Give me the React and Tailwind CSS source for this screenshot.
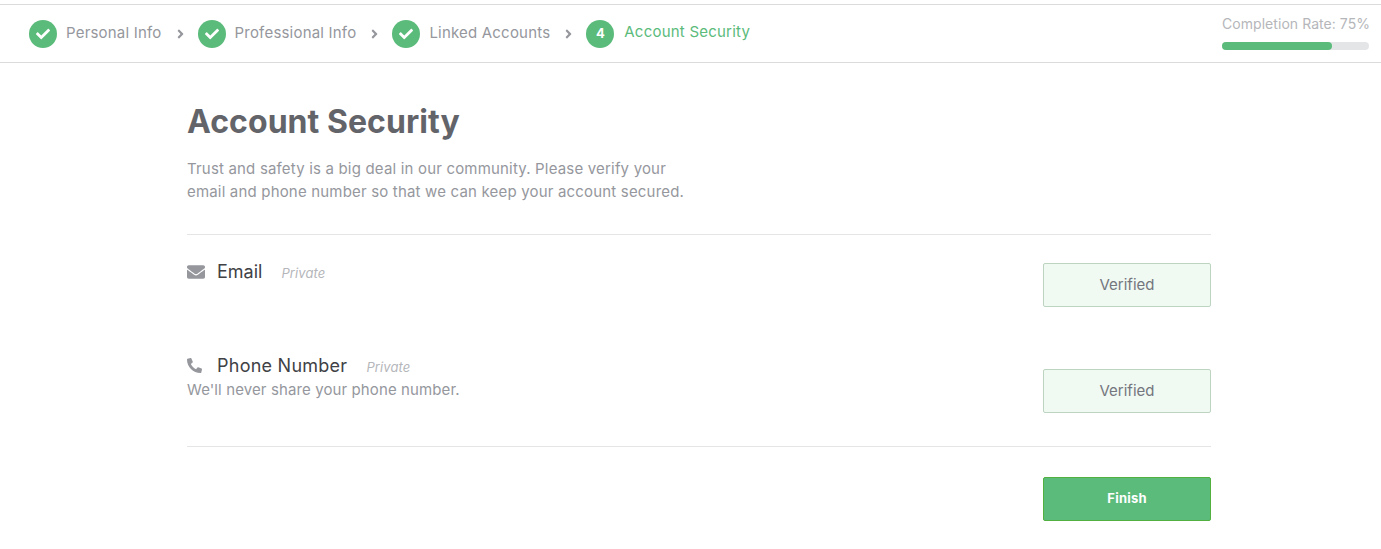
import { FaCheck, FaEnvelope, FaPhone, FaAngleRight } from "react-icons/fa";

const font = "font-['Inter',sans-serif]";

function Step({ label, done, number, active }) {
  return (
    <div className="flex items-center">
      <div className="w-7 h-7 rounded-full bg-[#5bbb7b] flex items-center justify-center text-white">
        {done ? <FaCheck className="w-[14px] h-[14px]" /> : <span className="text-[13px] font-bold">{number}</span>}
      </div>
      {active ? (
        <span className="ml-[10px] -mt-[2px] text-[15px] tracking-[0.22px] text-[#5bbb7b]">{label}</span>
      ) : (
        <span className="ml-[9px] text-[15px] tracking-[0.2px] text-[#95979d]">{label}</span>
      )}
    </div>
  );
}

function Chevron() {
  return <FaAngleRight className="ml-[13px] mr-3 w-[11px] h-[14px] text-[#95979d]" />;
}

function VerifiedButton() {
  return (
    <div className="w-[168px] h-[44px] rounded-[2px] border border-[#bcd4c0] bg-[#f0f9f2] flex items-center justify-center text-[15px] text-[#74767e]">
      Verified
    </div>
  );
}

export default function App() {
  return (
    <div className={`${font} bg-white min-h-[549px] pt-1`}>
      <div className="h-[59px] border-y border-[#dadbdd] flex items-center justify-between pl-[29px] pr-3">
        <div className="flex items-center">
          <Step label="Personal Info" done />
          <Chevron />
          <Step label="Professional Info" done />
          <Chevron />
          <Step label="Linked Accounts" done />
          <Chevron />
          <Step label="Account Security" number="4" active />
        </div>
        <div className="w-[147px] -mt-1">
          <p className="text-[14px] leading-[20px] tracking-[0.05px] text-[#b5b6ba] whitespace-nowrap">Completion Rate: 75%</p>
          <div className="mt-2 h-2 rounded-full bg-[#e4e5e7]">
            <div className="h-2 w-[75%] rounded-full bg-[#5bbb7b]" />
          </div>
        </div>
      </div>

      <div className="ml-[187px] w-[1024px]">
        <h1 className="mt-[38px] text-[32px] leading-[42px] tracking-[0.05px] font-bold text-[#62646a]">Account Security</h1>
        <p className="mt-[14px] text-[15px] leading-[23px] tracking-[0.18px] text-[#95979d]">
          Trust and safety is a big deal in our community. Please verify your
          <br />
          email and phone number so that we can keep your account secured.
        </p>

        <div className="mt-[31px] border-t border-[#e4e5e7] pt-[28px] flex justify-between h-[106px]">
          <div className="flex items-start">
            <FaEnvelope className="w-[18px] h-[18px] text-[#95979d]" />
            <span className="ml-3 text-[18px] leading-[18px] text-[#404145]">Email</span>
            <span className="ml-[19px] text-[13px] leading-[20px] tracking-[0.1px] italic text-[#b5b6ba]">Private</span>
          </div>
          <VerifiedButton />
        </div>

        <div className="flex justify-between h-[107px] border-b border-[#e4e5e7]">
          <div className="pt-[13px]">
            <div className="flex items-center h-6">
              <FaPhone className="w-[15px] h-[15px] text-[#95979d] scale-x-[-1]" />
              <span className="ml-[15px] text-[18px] tracking-[0.25px] text-[#404145]">Phone Number</span>
              <span className="ml-[19px] mt-[6px] text-[13px] tracking-[0.1px] italic text-[#b5b6ba]">Private</span>
            </div>
            <p className="mt-[2px] text-[15px] leading-[22px] tracking-[0.11px] text-[#95979d]">We'll never share your phone number.</p>
          </div>
          <div className="pt-[29px]">
            <VerifiedButton />
          </div>
        </div>

        <div className="flex justify-end mt-[30px]">
          <button className="w-[168px] h-[44px] rounded-[2px] border border-[#51b03f] bg-[#5bbb7b] text-white text-[13px] tracking-[0.2px] font-bold">
            Finish
          </button>
        </div>
      </div>
    </div>
  );
}
